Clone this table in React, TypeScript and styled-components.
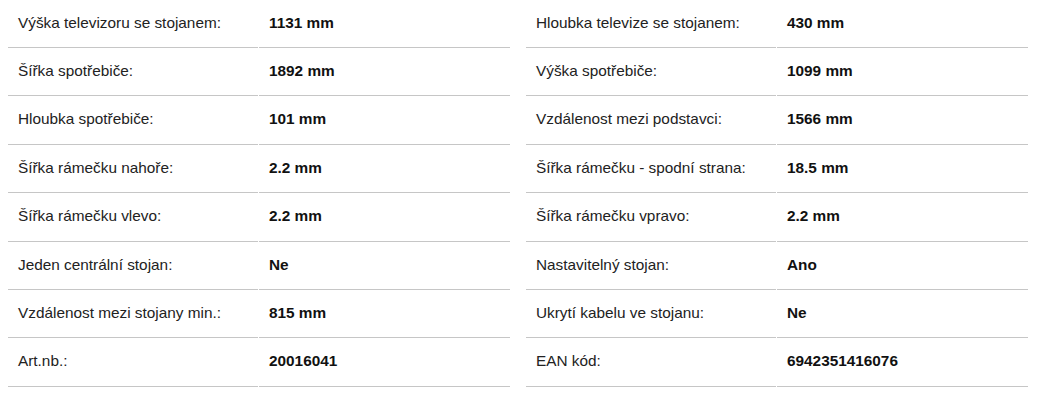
import styled, { createGlobalStyle } from "styled-components";

const GlobalStyle = createGlobalStyle`
  html, body {
    margin: 0;
    padding: 0;
    background: #ffffff;
  }
  body {
    font-family: "Liberation Sans", Arial, sans-serif;
    color: #1a1a1a;
  }
`;

type Spec = { label: string; value: string };

const leftSpecs: Spec[] = [
  { label: "Výška televizoru se stojanem:", value: "1131 mm" },
  { label: "Šířka spotřebiče:", value: "1892 mm" },
  { label: "Hloubka spotřebiče:", value: "101 mm" },
  { label: "Šířka rámečku nahoře:", value: "2.2 mm" },
  { label: "Šířka rámečku vlevo:", value: "2.2 mm" },
  { label: "Jeden centrální stojan:", value: "Ne" },
  { label: "Vzdálenost mezi stojany min.:", value: "815 mm" },
  { label: "Art.nb.:", value: "20016041" },
];

const rightSpecs: Spec[] = [
  { label: "Hloubka televize se stojanem:", value: "430 mm" },
  { label: "Výška spotřebiče:", value: "1099 mm" },
  { label: "Vzdálenost mezi podstavci:", value: "1566 mm" },
  { label: "Šířka rámečku - spodní strana:", value: "18.5 mm" },
  { label: "Šířka rámečku vpravo:", value: "2.2 mm" },
  { label: "Nastavitelný stojan:", value: "Ano" },
  { label: "Ukrytí kabelu ve stojanu:", value: "Ne" },
  { label: "EAN kód:", value: "6942351416076" },
];

const Wrapper = styled.div`
  display: flex;
  gap: 16px;
  padding: 1.5px 0 0 8px;
`;

const SpecTable = styled.div`
  width: 502px;
  display: flex;
  flex-direction: column;
  gap: 2px;
`;

const Row = styled.div`
  display: grid;
  grid-template-columns: 250px 1fr;
  column-gap: 1px;
`;

const Cell = styled.div<{ $bold?: boolean }>`
  padding: 12px 10px 16.03px;
  font-size: 15.35px;
  line-height: 17.4px;
  font-weight: ${(p) => (p.$bold ? 700 : 400)};
  color: ${(p) => (p.$bold ? "#111111" : "#222222")};
  border-bottom: 1px solid #c6c6c6;
  white-space: nowrap;
`;

const Table = ({ specs }: { specs: Spec[] }) => (
  <SpecTable>
    {specs.map((s) => (
      <Row key={s.label}>
        <Cell>{s.label}</Cell>
        <Cell $bold>{s.value}</Cell>
      </Row>
    ))}
  </SpecTable>
);

export default function App() {
  return (
    <>
      <GlobalStyle />
      <Wrapper>
        <Table specs={leftSpecs} />
        <Table specs={rightSpecs} />
      </Wrapper>
    </>
  );
}
